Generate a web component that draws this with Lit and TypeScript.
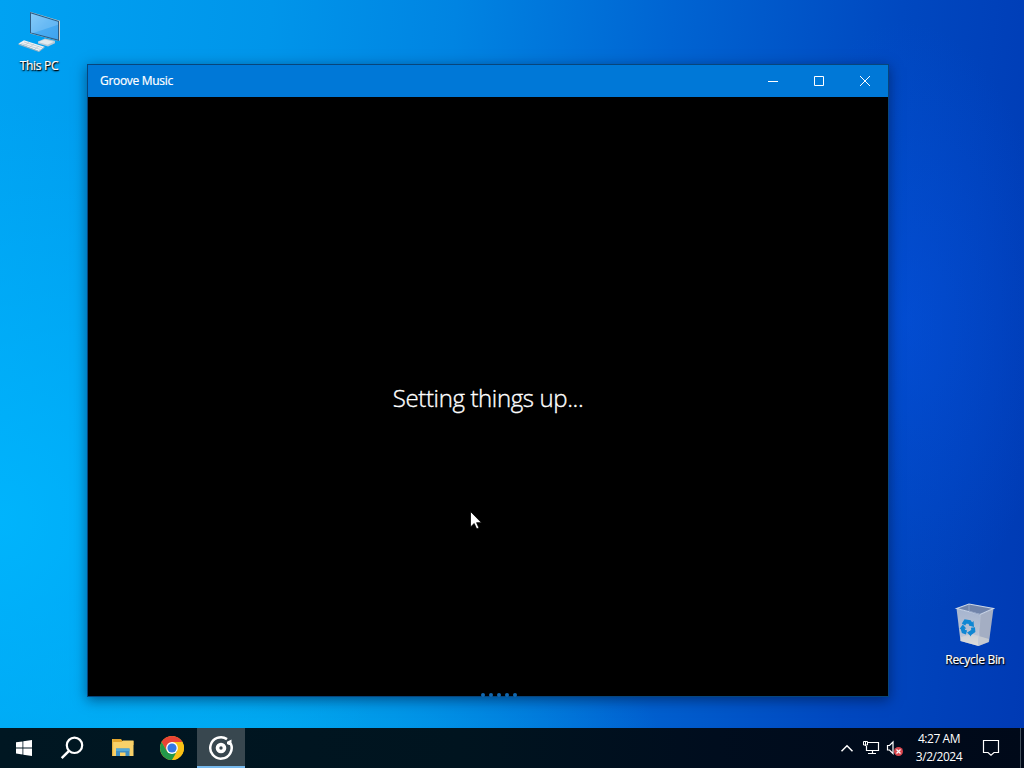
import { LitElement, html, css, svg } from 'lit'
import { customElement, property } from 'lit/decorators.js'
import { map } from 'lit/directives/map.js'

const font = css`'Open Sans', 'Noto Sans', sans-serif`

const thisPc = svg`
  <svg width="48" height="48" viewBox="0 0 48 48">
    <defs>
      <linearGradient id="screen" x1="0" y1="0" x2="1" y2="1">
        <stop offset="0" stop-color="#6cc0f8" />
        <stop offset=".5" stop-color="#4aacf2" />
        <stop offset="1" stop-color="#3fa3ee" />
      </linearGradient>
    </defs>
    <path d="M23 33.500l7-3 10 2.200v2.500l-7 3.300-10-3z" fill="#b5c8d6" />
    <path d="M23 34l7-2.500 9 2.200-6.500 3z" fill="#e0e9ee" />
    <path d="M15 3.700l30 9v19.500l-1.200.9-28.800-7.700z" fill="#c9cfcc" />
    <path d="M15 4l29 9v20l-29-7.800z" fill="#2b5c85" />
    <path d="M16 5.400l27 8.300v17.900l-27-7.200z" fill="url(#screen)" />
    <path d="M16 5.400l27 8.300v3l-27 9z" fill="#fff" opacity=".17" />
    <path d="M3.500 35.500l5.500-3.300 20.500 6.500-5.500 4.500z" fill="#eef2f4" />
    <path d="M3.500 35.500v1.200l20.500 7.400 5.500-4.300v-1.100l-5.500 4.300z" fill="#9fb4c2" />
    <path d="M6.500 35.500l19 6M9 34l18.500 5.800M10 37.300l4-3M15 39l4-3M20 41l4-3" stroke="#b4c4ce" stroke-width=".7" fill="none" />
  </svg>
`

const recycleBin = svg`
  <svg width="48" height="48" viewBox="0 0 48 48">
    <defs>
      <linearGradient id="bin" x1="0" y1="0" x2="0" y2="1">
        <stop offset="0" stop-color="#a5b4cf" />
        <stop offset=".75" stop-color="#bcc5d5" />
        <stop offset="1" stop-color="#e2e0da" />
      </linearGradient>
    </defs>
    <path d="M5.500 6.500L29 12.500l-1.500 31.500L9.500 39z" fill="url(#bin)" />
    <path d="M29 12.500l13.500-6-4.500 33.500-10.500 4z" fill="#a4aec3" />
    <path d="M10 35l11-3 17 5-.7 3-9.800 4L9.500 39z" fill="#dedcd8" opacity=".6" />
    <path d="M5.500 6.500L18 2l24.500 4.500L29 12.500z" fill="#7184aa" stroke="#ccd6e6" stroke-width="1.100" />
    <path d="M18 3v6l11 3.500" fill="none" stroke="#93a4c4" />
    <path d="M29 12.500L27.500 44" stroke="#c3cbd9" stroke-width=".8" />
    <g fill="none" stroke="#0f87d3" stroke-width="4">
      <path d="M12.500 22.500l2-3 4 .5 2 3" />
      <path d="M22 25.500l.3 3.500-3.300 2.500" />
      <path d="M15.500 30.500l-3-1-1-3.500" />
    </g>
    <path d="M22.500 19l.5 6-5-1.500zM20.500 28l-4.500 2.500 4 4zM8.500 27l3.300-4.500 3.500 4z" fill="#0f87d3" />
  </svg>
`

const start = svg`
  <svg width="16" height="16" viewBox="0 0 16 16" fill="#fff">
    <path d="M0 2.300l6.500-.9v6.100H0zM7.300 1.300L16 0v7.500H7.300zM0 8.400h6.500v6.100L0 13.600zM7.300 8.400H16V16l-8.700-1.300z" />
  </svg>
`

const search = svg`
  <svg width="24" height="24" viewBox="0 0 24 24" fill="none" stroke="#fff" stroke-width="2.200">
    <circle cx="14.500" cy="9.300" r="7.700" />
    <path d="M9 14.900L1.700 22.200" stroke-width="2.500" />
  </svg>
`

const explorer = svg`
  <svg width="24" height="24" viewBox="0 0 24 24">
    <path d="M2 3h9l1.500 2h11v4H2z" fill="#e3a52c" />
    <path d="M2 6h9.500L13 4.500h10.500V20H2z" fill="#f8d169" />
    <path d="M2 3h1.200v17H2z" fill="#e9b33c" />
    <path d="M6 12.500h13.500V20h-4v-3.500H10V20H6z" fill="#3e8fc4" />
    <path d="M6 12.500h13.500V15H6z" fill="#52a9d8" />
  </svg>
`

const chrome = svg`
  <svg width="24" height="24" viewBox="0 0 24 24">
    <circle cx="12" cy="12" r="12" fill="#fbc116" />
    <path d="M12 12L6.800 15 1.608 6A12 12 0 0 1 22.392 6H12z" fill="#ea4335" />
    <path d="M1.608 6L6.800 15A6 6 0 0 0 12 18h5.200L12 24A12 12 0 0 1 1.608 6z" fill="#23984a" />
    <path d="M12 24l5.200-9L12 12l-4 5z" fill="#23984a" />
    <path d="M22.392 6H12v6l5.200 3L12 24A12 12 0 0 0 22.392 6z" fill="#fbc116" />
    <circle cx="12" cy="12" r="5.900" fill="#fff" />
    <circle cx="12" cy="12" r="4.600" fill="#3478e5" />
  </svg>
`

const groove = svg`
  <svg width="26" height="26" viewBox="0 0 26 26" fill="none" stroke="#fff">
    <path d="M19 4.100A10.700 10.700 0 1 0 22.700 8.500" stroke-width="2.500" />
    <circle cx="13" cy="13" r="3.500" stroke-width="3.600" />
    <path d="M19 6.800l4.500-2.300v5.500h-2.500l-2-1z" fill="#fff" stroke="none" />
  </svg>
`

const chevron = svg`
  <svg width="14" height="9" viewBox="0 0 14 9" fill="none" stroke="#fff" stroke-width="1.500">
    <path d="M1.500 7.300L7 1.800l5.500 5.500" />
  </svg>
`

const network = svg`
  <svg width="18" height="16" viewBox="0 0 18 16" fill="none" stroke="#fff">
    <path d="M6 2.500h10.500v8H4.500V6M6 13.500h8M10.500 10.500v3" stroke-width="1.200" />
    <path d="M1.500 1.500h4v3.500h-4zM3.500 1v5" />
  </svg>
`

const volume = svg`
  <svg width="18" height="18" viewBox="0 0 18 18" fill="none" stroke="#fff">
    <path d="M1.500 5.500h2l3.500-3.500v11.500l-3.500-3.500h-2z" stroke-width="1.200" />
    <circle cx="12.500" cy="11.500" r="4.500" fill="#d9464e" stroke="none" />
    <path d="M10.500 9.500l4 4M14.500 9.500l-4 4" stroke-width="1.200" />
  </svg>
`

const notifications = svg`
  <svg width="18" height="18" viewBox="0 0 18 18" fill="none" stroke="#fff" stroke-width="1.200">
    <path d="M1.500 1.500h15v12h-4.500l-3 2.800-3-2.800h-4.500z" />
  </svg>
`

@customElement('desktop-icon')
export class DesktopIcon extends LitElement {
  static styles = css`
    :host {
      display: flex;
      flex-direction: column;
      align-items: center;
      width: 76px;
      font: 12px/16px ${font};
      color: #fff;
    }

    .label {
      margin-top: 2px;
      letter-spacing: -0.3px;
      white-space: nowrap;
      -webkit-text-stroke: 0.2px #fff;
      text-shadow: 0 1px 2px #000, 1px 1px 1px #000;
    }
  `

  @property() label = ''

  override render() {
    return html`
      <slot></slot>
      <span class="label">${this.label}</span>
    `
  }
}

@customElement('app-window')
export class AppWindow extends LitElement {
  static styles = css`
    :host {
      display: flex;
      flex-direction: column;
      box-sizing: border-box;
      border: 1px solid #07457c;
      background: #000;
      color: #fff;
      font-family: ${font};
      box-shadow: 0 3px 12px rgba(0, 10, 40, 0.5);
    }

    .titlebar {
      display: flex;
      align-items: center;
      height: 32px;
      background: #0078d7;
    }

    .title {
      flex: 1;
      padding: 0 0 2px 12px;
      font-size: 12px;
      letter-spacing: -0.3px;
      -webkit-text-stroke: 0.2px #fff;
    }

    .caption {
      display: grid;
      place-items: center;
      width: 46px;
      height: 32px;
    }

    .caption svg {
      display: block;
    }

    .content {
      position: relative;
      flex: 1;
      display: flex;
      justify-content: center;
    }

    .message {
      margin: 285px 0 0;
      height: 32px;
      font-size: 24px;
      line-height: 32px;
      font-weight: 300;
      letter-spacing: -0.37px;
      -webkit-text-stroke: 0.35px #fff;
      white-space: nowrap;
    }

    .progress {
      position: absolute;
      left: 393px;
      bottom: -1px;
      display: flex;
      gap: 4px;
    }

    .dot {
      width: 4px;
      height: 4px;
      border-radius: 50%;
      background: #1268b0;
    }
  `

  @property() heading = ''

  @property() message = ''

  override render() {
    return html`
      <div class="titlebar">
        <span class="title">${this.heading}</span>
        <span class="caption">
          <svg width="10" height="10" fill="none" stroke="#fff"><path d="M0 5.500h10" /></svg>
        </span>
        <span class="caption">
          <svg width="10" height="10" fill="none" stroke="#fff"><path d="M.5 .5h9v9h-9z" /></svg>
        </span>
        <span class="caption">
          <svg width="10" height="10" fill="none" stroke="#fff"><path d="M0 0l10 10M10 0L0 10" /></svg>
        </span>
      </div>
      <div class="content">
        <p class="message">${this.message}</p>
        <div class="progress">${map([0, 1, 2, 3, 4], () => html`<span class="dot"></span>`)}</div>
      </div>
    `
  }
}

@customElement('task-bar')
export class TaskBar extends LitElement {
  static styles = css`
    :host {
      display: flex;
      height: 40px;
      background: linear-gradient(90deg, #001722 0%, #00141f 45%, #000d1e 70%, #000919 100%);
      color: #fff;
      font: 12px/18px ${font};
    }

    .button {
      display: grid;
      place-items: center;
      width: 48px;
      height: 40px;
    }

    .button.pinned {
      padding-left: 2px;
    }

    .button.active {
      box-sizing: border-box;
      margin-left: 1px;
      background: #38474f;
      border-bottom: 2px solid #76b9ed;
      padding-top: 2px;
    }

    .tray {
      display: flex;
      align-items: center;
      margin-left: auto;
    }

    .tray svg {
      display: block;
    }

    .volume {
      margin: 1px 0 0 6px;
    }

    .network {
      margin: 0 0 0 8px;
    }

    .clock {
      width: 58px;
      margin-left: 6px;
      padding-bottom: 1px;
      text-align: center;
      white-space: nowrap;
      letter-spacing: -0.45px;
    }

    .notifications {
      margin: 0 20px 0 14px;
    }

    .show-desktop {
      width: 3px;
      height: 40px;
      border-left: 1px solid #44505c;
    }
  `

  @property() time = ''

  @property() date = ''

  override render() {
    return html`
      <div class="button">${start}</div>
      <div class="button">${search}</div>
      <div class="button pinned">${explorer}</div>
      <div class="button pinned">${chrome}</div>
      <div class="button active">${groove}</div>
      <div class="tray">
        <span>${chevron}</span>
        <span class="network">${network}</span>
        <span class="volume">${volume}</span>
        <div class="clock">
          <div>${this.time}</div>
          <div>${this.date}</div>
        </div>
        <span class="notifications">${notifications}</span>
        <span class="show-desktop"></span>
      </div>
    `
  }
}

@customElement('app-root')
export class AppRoot extends LitElement {
  static styles = css`
    :host {
      display: flex;
      flex-direction: column;
      width: 1024px;
      height: 768px;
      overflow: hidden;
    }

    .desktop {
      position: relative;
      flex: 1;
      background:
        radial-gradient(ellipse 150px 300px at 905px 320px, rgba(5, 82, 225, 0.55), transparent),
        radial-gradient(ellipse 420px 420px at 0 520px, rgba(0, 185, 255, 0.8), transparent),
        radial-gradient(ellipse 400px 160px at 260px 740px, rgba(0, 175, 240, 0.7), transparent),
        linear-gradient(95deg, #00a2f2 0%, #0095ea 25%, #0084e2 42%, #0064d2 62%, #0048c0 83%, #003ab4 100%);
    }

    .pc,
    .bin,
    .window,
    .cursor {
      position: absolute;
    }

    .pc {
      left: 1px;
      top: 8px;
    }

    .bin {
      left: 937px;
      top: 602px;
    }

    .window {
      left: 87px;
      top: 64px;
      width: 802px;
      height: 633px;
    }

    .cursor {
      left: 470px;
      top: 511px;
    }
  `

  override render() {
    return html`
      <main class="desktop">
        <desktop-icon class="pc" label="This PC">${thisPc}</desktop-icon>
        <desktop-icon class="bin" label="Recycle Bin">${recycleBin}</desktop-icon>
        <app-window class="window" heading="Groove Music" message="Setting things up..."></app-window>
        <svg class="cursor" width="13" height="20" viewBox="0 0 13 20">
          <path d="M.5 .5v15.500l3.700-3.500 2.500 5.500 2.300-1-2.400-5.300h4.900z" fill="#fff" stroke="#000" stroke-width=".8" />
        </svg>
      </main>
      <task-bar time="4:27 AM" date="3/2/2024"></task-bar>
    `
  }
}
